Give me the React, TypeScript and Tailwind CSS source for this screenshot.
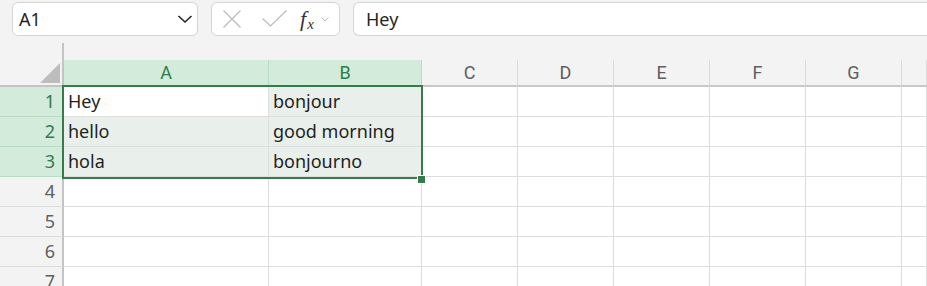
import { ChevronDown } from "lucide-react";

const COLS = ["A", "B", "C", "D", "E", "F", "G", ""];
const DATA: Record<number, [string, string]> = {
  1: ["Hey", "bonjour"],
  2: ["hello", "good morning"],
  3: ["hola", "bonjourno"],
};
const ROWS = [1, 2, 3, 4, 5, 6, 7];

const gridCols =
  "grid grid-cols-[64px_205px_153px_96px_96px_96px_96px_96px_1fr]";

function Toolbar() {
  return (
    <div className="h-[40px] flex items-start pt-[2px] pl-[12px] gap-[13px]">
      <div className="w-[186px] h-[34px] bg-white border border-[#d4d4d4] rounded-[6px] flex items-center pl-[6px] pr-[3px]">
        <span className="flex-1 text-[18px] text-[#242424]">A1</span>
        <svg width="16" height="10" viewBox="0 0 16 10" className="mr-[1px]">
          <polyline points="1.5,2 8,8 14.5,2" fill="none" stroke="#242424" strokeWidth="1.6" />
        </svg>
      </div>
      <div className="w-[129px] h-[34px] bg-white border border-[#d4d4d4] rounded-[6px] flex items-center pl-[11px]">
        <svg width="18" height="18" viewBox="0 0 18 18">
          <path d="M0.5 0.5 L17.5 17.5 M17.5 0.5 L0.5 17.5" stroke="#b9b9b9" strokeWidth="1.1" />
        </svg>
        <svg width="25" height="17" viewBox="0 0 25 17" className="ml-[21px] mt-[-2px]">
          <polyline points="0.5,8.5 8.5,16 24.5,0.5" fill="none" stroke="#b9b9b9" strokeWidth="1.1" />
        </svg>
        <span className="ml-[13px] font-['Liberation_Serif',serif] italic text-[22px] text-[#333] leading-none">
          f<span className="text-[15px] relative top-[3px] left-[1px]">x</span>
        </span>
        <svg width="8" height="5" viewBox="0 0 8 5" className="ml-[8px]">
          <polyline points="0.5,0.5 4,4 7.5,0.5" fill="none" stroke="#b9b9b9" strokeWidth="1" />
        </svg>
      </div>
      <div className="flex-1 h-[34px] bg-white border border-r-0 border-[#d4d4d4] rounded-l-[6px] flex items-center pl-[12px]">
        <span className="text-[18px] text-[#242424]">Hey</span>
      </div>
    </div>
  );
}

export default function App() {
  return (
    <div className="w-[927px] h-[286px] overflow-hidden bg-white font-['Noto_Sans',sans-serif]">
      <div className="bg-[#f3f3f3]">
        <Toolbar />
        <div className={`${gridCols} items-end`}>
          <div className="h-[47px] flex flex-col">
            <div className="mt-[3px] flex-1 border-r-2 border-b-2 border-[#c4c4c4] flex items-end justify-end pr-[2px] pb-[2px]">
              <svg width="20" height="20" viewBox="0 0 20 20">
                <polygon points="0,20 20,20 20,0" fill="#bdbdbd" />
              </svg>
            </div>
          </div>
          {COLS.map((c, i) => {
            const sel = i < 2;
            return (
              <div
                key={i}
                className={
                  sel
                    ? "h-[27px] flex items-center justify-center border-r border-r-[#b8dcc3] border-b-2 border-b-[#367c4b] bg-[#d3ebdb] text-[#2f7d48] text-[18px] font-['Roboto',sans-serif]"
                    : "h-[27px] flex items-center justify-center border-r border-r-[#dcdcdc] border-b-2 border-b-[#c8c8c8] text-[#5f5f5f] text-[18px] font-['Roboto',sans-serif]"
                }
              >
                {c}
              </div>
            );
          })}
        </div>
      </div>
      <div className="relative">
        {ROWS.map((r) => {
          const inRange = r <= 3;
          return (
            <div key={r} className={gridCols}>
              <div
                className={
                  inRange
                    ? "h-[30px] flex items-center justify-end pr-[7px] border-b border-b-[#b8dcc3] border-r-2 border-r-[#c4c4c4] bg-[#d3ebdb] text-[#2f7d48] text-[18px]"
                    : "h-[30px] flex items-center justify-end pr-[7px] border-b border-b-[#dcdcdc] border-r-2 border-r-[#c4c4c4] bg-[#f3f3f3] text-[#5f5f5f] text-[18px]"
                }
              >
                {r}
              </div>
              {COLS.map((_, i) => {
                const text = inRange && i < 2 ? DATA[r][i] : "";
                const fill =
                  inRange && i < 2
                    ? r === 1 && i === 0
                      ? "bg-white"
                      : "bg-[#e9f0eb]"
                    : "bg-white";
                return (
                  <div
                    key={i}
                    className={`h-[30px] flex items-center pl-[4px] border-r border-b border-[#dedede] text-[18px] text-[#1f1f1f] whitespace-nowrap ${fill}`}
                  >
                    {text}
                  </div>
                );
              })}
            </div>
          );
        })}
        {/* selection box */}
        <div className="absolute left-[62px] top-[-2px] w-[361px] h-[94px] border-2 border-[#367c4b] pointer-events-none" />
        <div className="absolute left-[417px] top-[88px] w-[9px] h-[9px] bg-white flex items-center justify-center">
          <div className="w-[7px] h-[7px] bg-[#367c4b]" />
        </div>
      </div>
    </div>
  );
}
